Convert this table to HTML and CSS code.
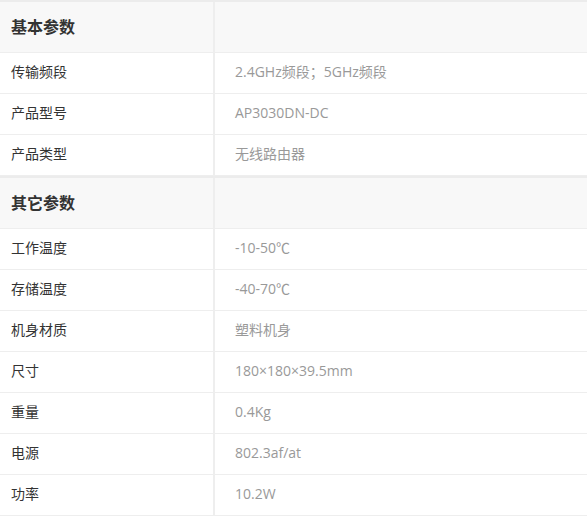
FILE: index.html
```html
<!DOCTYPE html>
<html lang="zh-CN">
<head>
<meta charset="utf-8">
<title>参数</title>
<link rel="stylesheet" href="styles.css">
</head>
<body>
<div class="specs">
  <div class="group">
    <div class="cell head">基本参数</div><div class="cell head"></div>
    <div class="cell key">传输频段</div><div class="cell val">2.4GHz频段；5GHz频段</div>
    <div class="cell key">产品型号</div><div class="cell val">AP3030DN-DC</div>
    <div class="cell key">产品类型</div><div class="cell val">无线路由器</div>
  </div>
  <div class="group">
    <div class="cell head">其它参数</div><div class="cell head"></div>
    <div class="cell key">工作温度</div><div class="cell val">-10-50℃</div>
    <div class="cell key">存储温度</div><div class="cell val">-40-70℃</div>
    <div class="cell key">机身材质</div><div class="cell val">塑料机身</div>
    <div class="cell key">尺寸</div><div class="cell val">180×180×39.5mm</div>
    <div class="cell key">重量</div><div class="cell val">0.4Kg</div>
    <div class="cell key">电源</div><div class="cell val">802.3af/at</div>
    <div class="cell key">功率</div><div class="cell val">10.2W</div>
  </div>
</div>
</body>
</html>
```

FILE: styles.css
```css
html, body {
  margin: 0;
  padding: 0;
  background: #fff;
}
body {
  font-family: "Open Sans", "Noto Sans CJK SC", sans-serif;
  font-size: 14px;
  color: #333;
}
.specs {
  width: 587px;
  border-top: 2px solid #ececec;
  display: flex;
  flex-direction: column;
  gap: 2px;
  background: #ececec;
}
.group {
  display: grid;
  grid-template-columns: 213px 1fr;
  column-gap: 2px;
  row-gap: 1px;
  background: #eeeeee;
  border-bottom: 1px solid #eeeeee;
}
.cell {
  background: #fff;
  height: 40px;
  box-sizing: border-box;
  padding-bottom: 3px;
  display: flex;
  align-items: center;
  line-height: 1;
}
.head {
  height: 50px;
  padding-bottom: 0;
  background: #f8f8f8;
  font-size: 16px;
  font-weight: bold;
  color: #333;
  padding-left: 11px;
}
.key {
  padding-left: 11px;
  color: #333;
}
.val {
  padding-left: 20px;
  color: #999;
}
```
